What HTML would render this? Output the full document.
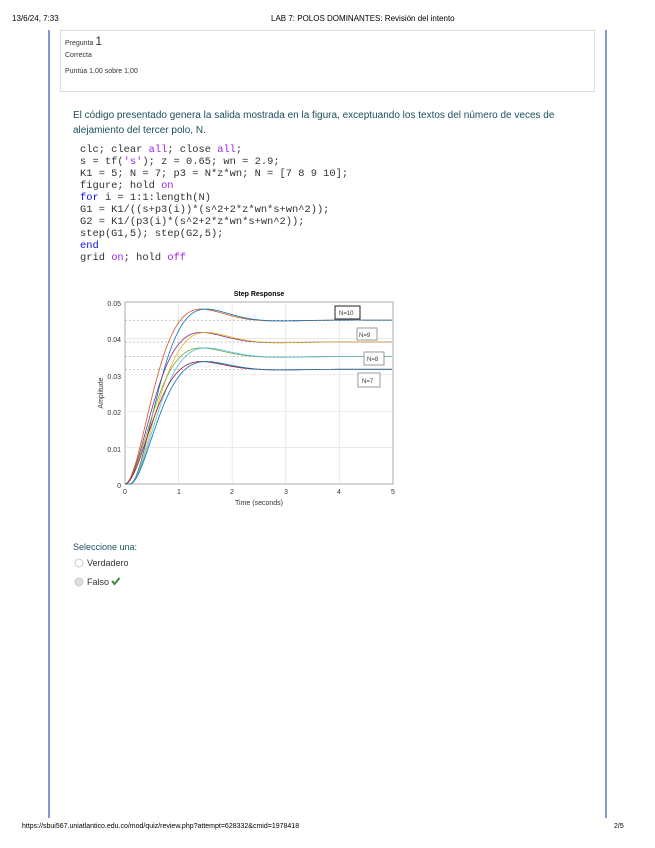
<!DOCTYPE html>
<html><head><meta charset="utf-8"><style>
body{margin:0;width:655px;height:848px;background:#fff;position:relative;font-family:"Liberation Sans",sans-serif;overflow:hidden}
.a{position:absolute;white-space:nowrap}
.vl{position:absolute;width:2px;background:#7f9bd0;top:30px;height:788px}
.box{position:absolute;left:60px;top:30px;width:533px;height:60px;border:1px solid #ddd}
.code{position:absolute;left:80px;top:144px;font-family:"Liberation Mono",monospace;font-size:10.4px;line-height:12px;color:#333;white-space:pre}
.k{color:#a020f0}.b{color:#1010e0}
.t{color:#1b4f5a;font-size:10px}
</style></head><body>
<div class="a" style="left:12px;top:14px;font-size:8px">13/6/24, 7:33</div>
<div class="a" style="left:271px;top:14px;font-size:8px">LAB 7: POLOS DOMINANTES: Revisión del intento</div>
<div class="vl" style="left:48px"></div><div class="vl" style="left:605px"></div>
<div class="box"></div>
<div class="a" style="left:65px;top:34px;font-size:7px;color:#333">Pregunta <span style="font-size:12px">1</span></div>
<div class="a" style="left:65px;top:52px;font-size:7px;color:#333">Correcta</div>
<div class="a" style="left:65px;top:68px;font-size:7px;color:#333">Puntúa 1,00 sobre 1,00</div>
<div class="a t" style="left:73px;top:110px">El código presentado genera la salida mostrada en la figura, exceptuando los textos del número de veces de</div>
<div class="a t" style="left:73px;top:125px">alejamiento del tercer polo, N.</div>
<div class="code">clc; clear <span class="k">all</span>; close <span class="k">all</span>;
s = tf(<span class="k">'s'</span>); z = 0.65; wn = 2.9;
K1 = 5; N = 7; p3 = N*z*wn; N = [7 8 9 10];
figure; hold <span class="k">on</span>
<span class="b">for</span> i = 1:1:length(N)
G1 = K1/((s+p3(i))*(s^2+2*z*wn*s+wn^2));
G2 = K1/(p3(i)*(s^2+2*z*wn*s+wn^2));
step(G1,5); step(G2,5);
<span class="b">end</span>
grid <span class="k">on</span>; hold <span class="k">off</span></div>
<svg class="a" style="left:0;top:0" width="655" height="848" id="sv">
<text x="259" y="296" font-size="7" font-weight="bold" text-anchor="middle" font-family="Liberation Sans">Step Response</text>
<rect x="125" y="302" width="268" height="182" fill="#fff" stroke="#888" stroke-width="0.7"/>
<g id="grid" stroke="#e2e2e2" stroke-width="0.7"></g>
<g id="curves" fill="none" stroke-width="0.8"></g>
<g font-family="Liberation Sans" font-size="7" fill="#333">
<text x="121" y="306" text-anchor="end">0.05</text><text x="121" y="342" text-anchor="end">0.04</text>
<text x="121" y="379" text-anchor="end">0.03</text><text x="121" y="415" text-anchor="end">0.02</text>
<text x="121" y="452" text-anchor="end">0.01</text><text x="121" y="488" text-anchor="end">0</text>
<text x="125" y="494" text-anchor="middle">0</text><text x="179" y="494" text-anchor="middle">1</text>
<text x="232" y="494" text-anchor="middle">2</text><text x="286" y="494" text-anchor="middle">3</text>
<text x="339" y="494" text-anchor="middle">4</text><text x="393" y="494" text-anchor="middle">5</text>
<text x="259" y="505" text-anchor="middle">Time (seconds)</text>
<text transform="translate(103,393) rotate(-90)" text-anchor="middle">Amplitude</text>
</g>
<g font-family="Liberation Sans" font-size="6" fill="#333">
<rect x="335" y="306" width="25" height="13" fill="#fff" stroke="#222"/><text x="339" y="315">N=10</text>
<rect x="357" y="328" width="20" height="12" fill="#fff" stroke="#999"/><text x="359" y="337">N=9</text>
<rect x="364" y="352" width="20" height="13" fill="#fff" stroke="#999"/><text x="367" y="361">N=8</text>
<rect x="358" y="373" width="22" height="14" fill="#fff" stroke="#999"/><text x="362" y="383">N=7</text>
</g>
<circle cx="79" cy="563" r="4" fill="#fff" stroke="#ccc"/>
<circle cx="79" cy="582" r="4" fill="#ddd" stroke="#ccc"/>
<path d="M112 581 l2.5 3 l5 -6" stroke="#3a8a3a" stroke-width="2" fill="none"/>
</svg>
<div class="a t" style="left:73px;top:542px;font-size:9px">Seleccione una:</div>
<div class="a" style="left:87px;top:558px;font-size:9px;color:#333">Verdadero</div>
<div class="a" style="left:87px;top:577px;font-size:9px;color:#333">Falso</div>
<div class="a" style="left:22px;top:823px;font-size:7px">https://sbui567.uniatlantico.edu.co/mod/quiz/review.php?attempt=628332&amp;cmid=1978418</div>
<div class="a" style="left:614px;top:823px;font-size:7px">2/5</div>
<script>
var ns="http://www.w3.org/2000/svg";
var g=document.getElementById('grid'),c=document.getElementById('curves');
function ln(p,x1,y1,x2,y2){var l=document.createElementNS(ns,'line');l.setAttribute('x1',x1);l.setAttribute('y1',y1);l.setAttribute('x2',x2);l.setAttribute('y2',y2);p.appendChild(l);return l;}
for(var i=1;i<5;i++)ln(g,125+i*53.6,302,125+i*53.6,484);
for(var i=1;i<5;i++)ln(g,125,484-i*36.4,393,484-i*36.4);
var z=0.65,wn=2.9,wd=wn*Math.sqrt(1-z*z);
function s2(t){if(t<=0)return 0;return 1-Math.exp(-z*wn*t)*(Math.cos(wd*t)+z/Math.sqrt(1-z*z)*Math.sin(wd*t));}
var ss=[0.045,0.039,0.035,0.0315],cols=[["#d95319","#0072bd"],["#7e2f8e","#edb120"],["#77ac30","#4dbeee"],["#a2142f","#0072bd"]];
ss.forEach(function(v,k){[0,0.09].forEach(function(d,j){var p="";for(var t=0;t<=5;t+=0.03){var y=v*s2(t-d);p+=(t?"L":"M")+(125+t*53.6).toFixed(1)+" "+(484-y*3640).toFixed(1);}
var e=document.createElementNS(ns,'path');e.setAttribute('d',p);e.setAttribute('stroke',cols[k][j]);c.appendChild(e);});
var l=ln(c,125,484-v*3640,393,484-v*3640);l.setAttribute('stroke','#888');l.setAttribute('stroke-dasharray','2 2');l.setAttribute('stroke-width','0.5');});
</script>
</body></html>
